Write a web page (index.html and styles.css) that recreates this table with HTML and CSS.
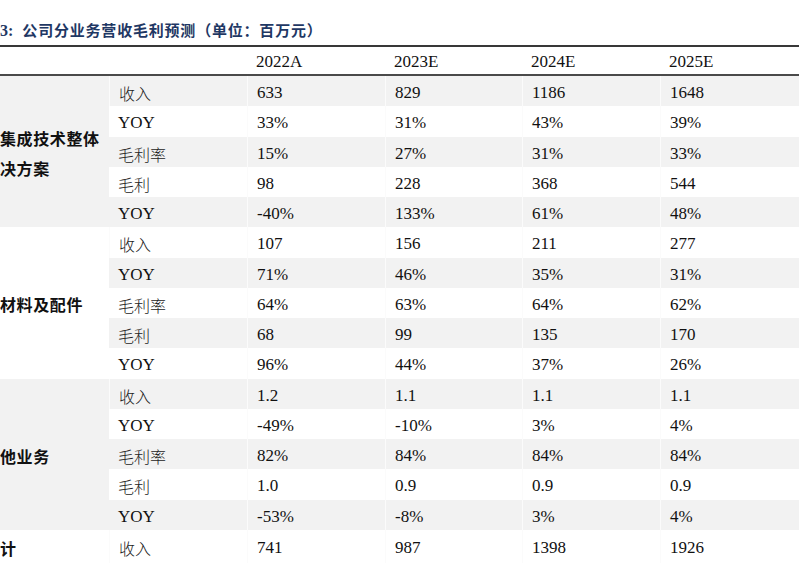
FILE: index.html
```html
<!DOCTYPE html>
<html lang="zh">
<head>
<meta charset="utf-8">
<link rel="stylesheet" href="styles.css">
</head>
<body>
<div class="title"><span class="num">3:</span>公司分业务营收毛利预测（单位：百万元）</div>
<table class="fc">
  <colgroup>
    <col class="c1"><col class="c2"><col class="c3"><col class="c4"><col class="c5"><col class="c6">
  </colgroup>
  <thead>
    <tr><th></th><th></th><th>2022A</th><th>2023E</th><th>2024E</th><th>2025E</th></tr>
  </thead>
  <tbody>
    <tr class="g"><td class="grp" rowspan="5"><span>集成技术整体</span><span>决方案</span></td><td class="cn">收入</td><td>633</td><td>829</td><td>1186</td><td>1648</td></tr>
    <tr><td>YOY</td><td>33%</td><td>31%</td><td>43%</td><td>39%</td></tr>
    <tr class="g"><td class="cn">毛利率</td><td>15%</td><td>27%</td><td>31%</td><td>33%</td></tr>
    <tr><td class="cn">毛利</td><td>98</td><td>228</td><td>368</td><td>544</td></tr>
    <tr class="g"><td>YOY</td><td>-40%</td><td>133%</td><td>61%</td><td>48%</td></tr>

    <tr><td class="grp w" rowspan="5"><span>材料及配件</span></td><td class="cn">收入</td><td>107</td><td>156</td><td>211</td><td>277</td></tr>
    <tr class="g"><td>YOY</td><td>71%</td><td>46%</td><td>35%</td><td>31%</td></tr>
    <tr><td class="cn">毛利率</td><td>64%</td><td>63%</td><td>64%</td><td>62%</td></tr>
    <tr class="g"><td class="cn">毛利</td><td>68</td><td>99</td><td>135</td><td>170</td></tr>
    <tr><td>YOY</td><td>96%</td><td>44%</td><td>37%</td><td>26%</td></tr>

    <tr class="g"><td class="grp" rowspan="5"><span>他业务</span></td><td class="cn">收入</td><td>1.2</td><td>1.1</td><td>1.1</td><td>1.1</td></tr>
    <tr><td>YOY</td><td>-49%</td><td>-10%</td><td>3%</td><td>4%</td></tr>
    <tr class="g"><td class="cn">毛利率</td><td>82%</td><td>84%</td><td>84%</td><td>84%</td></tr>
    <tr><td class="cn">毛利</td><td>1.0</td><td>0.9</td><td>0.9</td><td>0.9</td></tr>
    <tr class="g"><td>YOY</td><td>-53%</td><td>-8%</td><td>3%</td><td>4%</td></tr>

    <tr><td class="grp w"><span>计</span></td><td class="cn">收入</td><td>741</td><td>987</td><td>1398</td><td>1926</td></tr>
  </tbody>
</table>
</body>
</html>
```

FILE: styles.css
```css
html, body {
  margin: 0;
  padding: 0;
  background: #ffffff;
}
body {
  width: 806px;
  height: 586px;
  overflow: hidden;
  font-family: "Liberation Serif", "Noto Sans CJK SC", serif;
  color: #111111;
}
.title {
  height: 45px;
  box-sizing: border-box;
  padding-top: 21px;
  font-family: "Liberation Serif", "Noto Sans CJK SC", serif;
  font-size: 15px;
  line-height: 20px;
  font-weight: bold;
  letter-spacing: 0.8px;
  color: #1f3864;
  white-space: nowrap;
}
.title .num {
  font-size: 16px;
  letter-spacing: 0;
  margin-right: 9px;
}
.fc {
  width: 799px;
  table-layout: fixed;
  border-collapse: separate;
  border-spacing: 0;
  font-size: 17px;
}
.c1 { width: 109px; }
.c2 { width: 138px; }
.c3 { width: 138px; }
.c4 { width: 137px; }
.c5 { width: 138px; }
.c6 { width: 139px; }
.fc th {
  height: 28px;
  padding: 3px 0 0 9px;
  box-sizing: border-box;
  text-align: left;
  font-weight: normal;
  border-top: 2px solid #383838;
  border-bottom: 2px solid #4a4a4a;
  line-height: 24px;
}
.fc th:first-child { padding: 0; }
.fc td {
  height: 30.25px;
  box-sizing: border-box;
  padding: 4px 0 0 9px;
  line-height: 22px;
  vertical-align: middle;
  border-left: 1px solid #fbfbfb;
  white-space: nowrap;
}
.fc tr td:first-child { border-left: none; }
.fc tr.g td { background: #f2f2f2; }
.fc td.grp {
  padding: 3px 0 0 0;
  background: #f2f2f2;
  font-family: "Noto Sans CJK SC", sans-serif;
  font-weight: bold;
  font-size: 16px;
  letter-spacing: 0.6px;
  line-height: 30px;
  color: #111111;
}
.fc td.grp span { display: block; }
.fc tr td.grp.w { background: #ffffff; }
.fc td.cn {
  font-family: "Noto Sans CJK SC", sans-serif;
  font-size: 16px;
  font-weight: 300;
  color: #222222;
}
```
